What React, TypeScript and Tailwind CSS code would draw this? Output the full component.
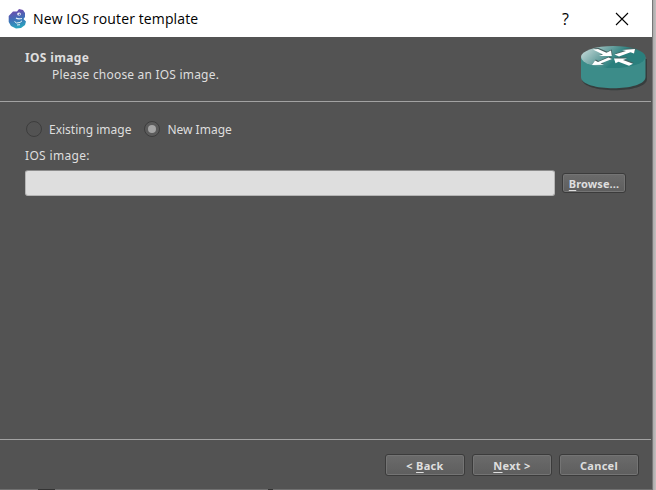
import type { ReactNode } from "react";

function GnsLogo() {
  return (
    <svg width="20" height="22" viewBox="0 0 20 22" className="block shrink-0">
      <defs>
        <linearGradient id="gecko" x1="0.4" y1="0" x2="0.6" y2="1">
          <stop offset="0" stopColor="#7146ac" />
          <stop offset="0.5" stopColor="#3f70b8" />
          <stop offset="1" stopColor="#27a9bd" />
        </linearGradient>
      </defs>
      <path d="M5 3.5 L9 3.5 L11 1 L15 2 L17 5 L17 9 L15.5 11 L18 13.5 L17 17 L13 20 L8 20.5 L3 18 L.7 14 L.7 8 Z" fill="url(#gecko)" />
      <ellipse cx="11" cy="6" rx="1.8" ry="1.6" fill="#fff" />
      <circle cx="11.3" cy="6.2" r=".7" fill="#40549a" />
      <path d="M8 10 Q10 11.5 14 10.5" fill="none" stroke="#e6f0f8" strokeWidth="1.1" />
      <path d="M6.5 13.5 L8.5 15 L12 14.5 L14 12.8 M9 17 L12 16.7" fill="none" stroke="#e6f4f8" strokeWidth="1" />
    </svg>
  );
}

function Arrows() {
  return (
    <>
      <path d="M13 4.5 L18 4 L26.5 7.7 L31 5.5 L31.8 11 L19 11 L23 9.5 Z" />
      <path d="M34.5 9.5 L46 6 L42 5 L55 4 L54 8.5 L50.5 7.3 L39 11.5 Z" />
      <path d="M28.5 12.5 L18 17 L15 15.5 L12 20 L24 19.8 L20.5 18.5 L32 14 Z" />
      <path d="M34 13.5 L47 13.5 L43 15 L53 18.7 L49 20.8 L38.5 16.7 L35.5 18.2 Z" />
    </>
  );
}

function RouterIcon() {
  return (
    <svg width="67" height="46" viewBox="0 0 67 46" className="block shrink-0">
      <defs>
        <linearGradient id="top" x1="0" y1="0.4" x2="0.55" y2="0.6">
          <stop offset="0" stopColor="#b5d0cf" />
          <stop offset="0.45" stopColor="#78aaa9" />
          <stop offset="1" stopColor="#2a7f7d" />
        </linearGradient>
      </defs>
      <path d="M2 14 V34 C2 49 67 49 67 34 V14 Z" fill="#373d3d" />
      <path d="M1 12 V32 C1 47 65.5 47 65.5 32 V12 Z" fill="#3c8c89" />
      <ellipse cx="33.25" cy="12" rx="32.25" ry="11" fill="url(#top)" />
      <g fill="#45605f" transform="translate(.7 -.9)">
        <Arrows />
      </g>
      <g fill="#fff">
        <Arrows />
      </g>
    </svg>
  );
}

function PushButton({ children, small = false }: { children: ReactNode; small?: boolean }) {
  return (
    <button
      className={`flex shrink-0 items-center justify-center whitespace-pre rounded-[3px] border border-[#3b3b3b] bg-linear-to-b from-[#6b6b6b] to-[#5e5e5e] font-['Noto_Sans'] text-[11px] leading-none font-bold text-[#dedede] shadow-[inset_0_0_0_1px_#747474] ${small ? "h-5 w-16 pt-px tracking-[0.1px]" : "h-[22px] w-20 tracking-[0.3px]"}`}
    >
      {children}
    </button>
  );
}

function Key({ children }: { children: string }) {
  return <span className="underline decoration-1 underline-offset-2">{children}</span>;
}

function Radio({ label, checked = false }: { label: string; checked?: boolean }) {
  return (
    <label className="flex items-center gap-[7px]">
      <span className={`flex size-4 items-center justify-center rounded-full border border-[#3d3d3d] ${checked ? "bg-[#5b5b5b]" : ""}`}>
        {checked && <span className="size-2 rounded-full bg-[#a5a5a5]" />}
      </span>
      <span className="pt-px leading-[15px]">{label}</span>
    </label>
  );
}

export default function App() {
  return (
    <div className="flex h-[490px] w-[656px] overflow-hidden bg-[#b5b3b3] font-['Noto_Sans',sans-serif]">
      <main className="flex w-[653px] flex-col border-r border-[#777] bg-[#535353] text-[12px] leading-4 text-[#dedede]">
        <header className="flex h-[37px] shrink-0 items-center bg-white pr-[23px] pl-2 text-black">
          <GnsLogo />
          <h1 className="ml-[5px] font-['Open_Sans',sans-serif] text-[14px] tracking-[0.12px] whitespace-nowrap">New IOS router template</h1>
          <span className="ml-auto font-['Open_Sans',sans-serif] text-[16px]">?</span>
          <svg width="14" height="14" viewBox="0 0 14 14" className="ml-[46px]">
            <path d="M1 1 L13 13 M13 1 L1 13" stroke="#000" strokeWidth="1.1" />
          </svg>
        </header>
        <section className="mr-[1px] flex h-[65px] shrink-0 justify-between border-b border-[#a2a2a2] pt-2 pr-[4px] pl-[25px]">
          <div className="pt-[5px]">
            <h2 className="font-bold tracking-[0.35px]">IOS image</h2>
            <p className="pt-[1px] pl-[27px] tracking-[0.2px]">Please choose an IOS image.</p>
          </div>
          <RouterIcon />
        </section>
        <section className="flex grow flex-col pt-[19px] pr-[26px] pl-[26px]">
          <div className="flex gap-[13px]">
            <Radio label="Existing image" />
            <Radio label="New Image" checked />
          </div>
          <p className="-ml-px pt-[11px] tracking-[0.33px]">IOS image:</p>
          <div className="mt-[6px] -ml-px flex items-center gap-[7px]">
            <div className="h-[26px] w-[530px] rounded-[3px] border border-[#b5b5b5] border-t-[#8d8d8d] bg-[#dedede]" />
            <PushButton small>
              <Key>B</Key>rowse...
            </PushButton>
          </div>
        </section>
        <footer className="mr-[1px] flex h-[50px] shrink-0 justify-end gap-[7px] border-t border-[#a2a2a2] pt-[14px] pr-3">
          <PushButton>
            {"< "}
            <Key>B</Key>ack
          </PushButton>
          <PushButton>
            <Key>N</Key>ext {">"}
          </PushButton>
          <PushButton>Cancel</PushButton>
        </footer>
        <div className="flex h-px shrink-0 bg-[#707070]">
          <span className="ml-[38px] h-px w-[17px] bg-[#343434]" />
          <span className="ml-[213px] h-px w-[5px] bg-[#343434]" />
        </div>
      </main>
      <aside className="grow bg-linear-to-r from-[#aaa] to-[#c2bfbf]" />
    </div>
  );
}
